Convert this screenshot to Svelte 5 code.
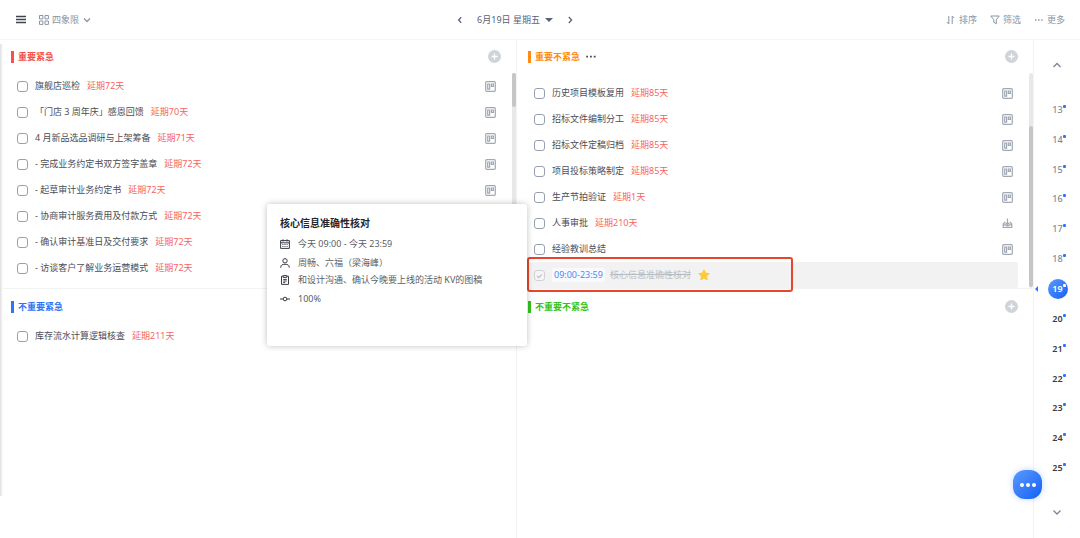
<script lang="ts">
  type Task = {
    title: string
    late?: string
    source?: 'board' | 'inbox'
    time?: string
    done?: boolean
  }

  type Quadrant = {
    name: string
    tone: string
    tasks: Task[]
    more?: boolean
    scroll?: 'start' | 'end'
  }

  const quadrants: Quadrant[] = [
    {
      name: '重要紧急',
      tone: 'red',
      scroll: 'start',
      tasks: [
        { title: '旗舰店巡检', late: '延期72天', source: 'board' },
        { title: '「门店 3 周年庆」感恩回馈', late: '延期70天', source: 'board' },
        { title: '4 月新品选品调研与上架筹备', late: '延期71天', source: 'board' },
        { title: '- 完成业务约定书双方签字盖章', late: '延期72天', source: 'board' },
        { title: '- 起草审计业务约定书', late: '延期72天', source: 'board' },
        { title: '- 协商审计服务费用及付款方式', late: '延期72天', source: 'board' },
        { title: '- 确认审计基准日及交付要求', late: '延期72天', source: 'board' },
        { title: '- 访谈客户了解业务运营模式', late: '延期72天', source: 'board' }
      ]
    },
    {
      name: '重要不紧急',
      tone: 'orange',
      more: true,
      scroll: 'end',
      tasks: [
        { title: '历史项目模板复用', late: '延期85天', source: 'board' },
        { title: '招标文件编制分工', late: '延期85天', source: 'board' },
        { title: '招标文件定稿归档', late: '延期85天', source: 'board' },
        { title: '项目投标策略制定', late: '延期85天', source: 'board' },
        { title: '生产节拍验证', late: '延期1天', source: 'board' },
        { title: '人事审批', late: '延期210天', source: 'inbox' },
        { title: '经验教训总结', source: 'board' },
        { title: '核心信息准确性核对', time: '09:00-23:59', done: true }
      ]
    },
    {
      name: '不重要紧急',
      tone: 'blue',
      tasks: [{ title: '库存流水计算逻辑核查', late: '延期211天' }]
    },
    { name: '不重要不紧急', tone: 'green', tasks: [] }
  ]

  const days = Array.from({ length: 13 }, (_, i) => 13 + i)
  let selected = $state(19)
</script>

{#snippet chevron(d: string)}
  <svg class="chevron" viewBox="0 0 10 10" width="10" height="10"><path {d} /></svg>
{/snippet}

<div class="page">
  <header>
    <div class="head-left">
      <button class="menu" aria-label="菜单">
        <svg viewBox="0 0 10 10" width="10" height="10"><path d="M0 1.5h10M0 4.5h10M0 7.5h10" /></svg>
      </button>
      <button class="view">
        <svg class="line" viewBox="0 0 10 10" width="10" height="10">
          <path d="M.5 .5h3.4v3.4H.5zM6 .5h3.4v3.4H6zM.5 6h3.4v3.4H.5zM6 6h3.4v3.4H6z" />
        </svg>
        四象限
        {@render chevron('M2 3.5 5 6.5 8 3.5')}
      </button>
    </div>
    <div class="head-date">
      <button aria-label="前一天">{@render chevron('M6.2 2.2 3.6 5 6.2 7.8')}</button>
      <button class="date">6月19日 星期五 <span class="caret"></span></button>
      <button aria-label="后一天">{@render chevron('M3.8 2 6.6 5 3.8 8')}</button>
    </div>
    <div class="head-right">
      <button>
        <svg class="line" viewBox="0 0 10 10" width="10" height="10"><path d="M2.8 1v8L.8 7M6.2 9V1l2 2" /></svg>
        排序
      </button>
      <button>
        <svg class="line" viewBox="0 0 10 10" width="10" height="10"><path d="M.8 1h8.4L6.3 4.8v4L3.8 7.2V4.8z" /></svg>
        筛选
      </button>
      <button>
        <svg class="dots" viewBox="0 0 10 10" width="10" height="10"><path d="M1 4.3h1.4v1.4H1zM4.1 4.3h1.4v1.4H4.1zM7.2 4.3h1.4v1.4H7.2z" /></svg>
        更多
      </button>
    </div>
  </header>

  <main>
    <div class="board">
      {#each quadrants as q}
        <section class={q.tone}>
          <div class="title">
            <h2>{q.name}</h2>
            {#if q.more}
              <button class="title-more" aria-label="更多操作">
                <svg viewBox="0 0 10 4" width="10" height="4"><path d="M.2 .7h1.8v1.8H.2zM4 .7h1.8v1.8H4zM7.8 .7h1.8v1.8H7.8z" /></svg>
              </button>
            {/if}
            {#if q.tone !== 'blue'}
              <button class="add" aria-label="新建">
                <svg viewBox="0 0 13 13" width="13" height="13">
                  <circle cx="6.5" cy="6.5" r="6.5" />
                  <path d="M6.5 3.5v6M3.5 6.5h6" />
                </svg>
              </button>
            {/if}
          </div>
          <div class="scroller" class:scrolled={q.scroll === 'end'}>
            <ul>
              {#each q.tasks as t}
                <li class:done={t.done}>
                  <label>
                    <input type="checkbox" checked={t.done} />
                    {#if t.time}<span class="time">{t.time}</span>{/if}
                    <span class="name">{t.title}</span>
                  </label>
                  {#if t.late}<span class="late">{t.late}</span>{/if}
                  {#if t.done}
                    <svg class="star" viewBox="0 0 12 12" width="12" height="12">
                      <path d="M6 .8 7.6 4.1l3.6.5-2.6 2.6.6 3.6L6 9.1l-3.2 1.7.6-3.6L.8 4.6l3.6-.5z" />
                    </svg>
                    <span class="marker"></span>
                  {/if}
                  {#if t.source === 'board'}
                    <svg class="source" viewBox="0 0 11 11" width="11" height="11">
                      <rect x=".7" y=".7" width="9.6" height="9.6" rx="1" />
                      <path d="M2.7 3h1.9v5.2H2.7zM6.4 3h2v2.4h-2z" />
                    </svg>
                  {:else if t.source === 'inbox'}
                    <svg class="source" viewBox="0 0 11 11" width="11" height="11">
                      <path d="M5.5 .5v6M3.6 4.8l1.9 1.8 1.9-1.8M3 4 1.2 6v3.5h8.6V6L8 4M1.2 6.8h2.3l.8 1h2.4l.8-1h2.3" />
                    </svg>
                  {/if}
                </li>
              {/each}
            </ul>
            {#if q.scroll}
              <div class="track"><div class="thumb {q.scroll}"></div></div>
            {/if}
          </div>
        </section>
      {/each}
    </div>

    <nav aria-label="日期">
      <button class="step" aria-label="向上">{@render chevron('M1.5 7 5 3.5 8.5 7')}</button>
      <ol>
        {#each days as day}
          <li class:current={day === selected}>
            <button class="day" class:past={day < selected} onclick={() => (selected = day)}>{day}</button>
          </li>
        {/each}
      </ol>
      <button class="step" aria-label="向下">{@render chevron('M1.5 3.5 5 7 8.5 3.5')}</button>
    </nav>
  </main>

  <aside class="popover">
    <h3>核心信息准确性核对</h3>
    <p class="when">
      <svg viewBox="0 0 10 10" width="10" height="10"><path d="M.6 1.6h8.8v7.8H.6zM.6 3.8h8.8M3 .3v2.2M7 .3v2.2" /><path d="M2.4 5.5h1M4.5 5.5h1M6.6 5.5h1M2.4 7.5h1M4.5 7.5h1M6.6 7.5h1" /></svg>
      今天 09:00 - 今天 23:59
    </p>
    <p class="who">
      <svg viewBox="0 0 10 10" width="10" height="10"><circle cx="5" cy="2.8" r="2.2" /><path d="M.8 9.7V9c0-2 1.6-2.7 4.2-2.7S9.2 7 9.2 9v.7" /></svg>
      周畅、六福（梁海峰）
    </p>
    <p class="note">
      <svg viewBox="0 0 10 10" width="10" height="10"><path d="M3.2 1.2H1.5v8.2h7V1.2H6.8M3.2 .6h3.6v1.8H3.2zM3.2 4.4h3.6M3.2 6h3.6M3.2 7.6h2" /></svg>
      和设计沟通、确认今晚要上线的活动 KV的图稿
    </p>
    <p class="progress">
      <svg viewBox="0 0 10 10" width="10" height="10"><circle cx="5" cy="5" r="1.8" /><path d="M0 5h3.2M6.8 5H10" /></svg>
      100%
    </p>
  </aside>

  <button class="fab" aria-label="更多功能">
    <svg viewBox="0 0 16 4" width="16" height="4"><circle cx="2" cy="2" r="2" /><circle cx="8" cy="2" r="2" /><circle cx="14" cy="2" r="2" /></svg>
  </button>
</div>

<style>
  :global(body) {
    margin: 0;
    background: #fff;
  }

  .page {
    position: relative;
    display: flex;
    flex-direction: column;
    min-height: 100vh;
    font: 9px/14px "Noto Sans", "Noto Sans CJK SC", sans-serif;
    color: #4a4d55;
  }

  .page::before {
    content: '';
    position: absolute;
    left: 0;
    top: 44px;
    bottom: 42px;
    width: 3px;
    background: linear-gradient(90deg, #dedede, #fff);
  }

  button {
    display: flex;
    align-items: center;
    padding: 0;
    border: 0;
    background: none;
    font: inherit;
    color: inherit;
    cursor: pointer;
  }

  svg {
    flex-shrink: 0;
    fill: none;
    stroke: currentColor;
  }

  .chevron {
    stroke-width: 1.3;
  }

  h2, h3, p, ul, ol {
    margin: 0;
    padding: 0;
    list-style: none;
  }

  header {
    display: flex;
    align-items: center;
    height: 39px;
    border-bottom: 1px solid #f5f5f6;
    color: #8b95a5;
  }

  .head-left {
    flex: 1 1 0;
    display: flex;
    gap: 13px;
    padding-left: 16px;
    box-sizing: border-box;
  }

  .menu {
    color: #3e434c;
  }

  .menu svg {
    stroke-width: 1.4;
  }

  .view {
    gap: 3px;
  }

  .head-date {
    display: flex;
    align-items: center;
    gap: 12px;
    color: #59627a;
  }

  .date {
    gap: 5px;
  }

  .caret {
    border: 4px solid transparent;
    border-top-color: #59627a;
    border-bottom: 0;
  }

  .head-right {
    flex: 1 1 52px;
    display: flex;
    justify-content: flex-end;
    gap: 13px;
    padding-right: 15px;
    margin-left: 14px;
    box-sizing: border-box;
  }

  .head-right button {
    gap: 3px;
  }

  .dots {
    fill: currentColor;
    stroke: none;
  }

  main {
    flex: 1;
    display: flex;
  }

  .board {
    flex: 1;
    display: grid;
    grid-template-columns: 1fr 1fr;
    grid-template-rows: auto 1fr;
  }

  section {
    border-right: 1px solid #f3f3f5;
  }

  .red,
  .orange {
    border-bottom: 1px solid #f3f3f5;
  }

  .blue,
  .green {
    padding-top: 1px;
  }

  .title {
    display: flex;
    align-items: center;
    height: 33px;
    padding: 0 15px 0 11px;
  }

  h2 {
    padding-left: 4px;
    border-left: 3px solid currentColor;
    font-size: 9px;
    line-height: 12px;
    font-weight: 700;
  }

  .red h2 { color: #f8514b; }
  .orange h2 { color: #ff8c12; }
  .blue h2 { color: #3174f6; }
  .green h2 { color: #35c41c; }

  .title-more {
    margin-left: 6px;
  }

  .title-more svg {
    fill: #4a4d55;
    stroke: none;
  }

  .add {
    margin-left: auto;
  }

  .add circle {
    fill: #cfd3da;
    stroke: none;
  }

  .add path {
    stroke: #fff;
    stroke-width: 1.3;
  }

  .scroller {
    display: flex;
  }

  .scroller ul {
    flex: 1;
    padding-right: 4px;
  }

  .red ul,
  .orange ul {
    padding-right: 0;
  }

  .red ul {
    padding-bottom: 7px;
  }

  .scrolled ul {
    padding-top: 7px;
  }

  ul li {
    position: relative;
    display: flex;
    align-items: center;
    height: 26px;
    margin: 0 11px;
    padding: 0 5px 0 6px;
  }

  label {
    display: flex;
    align-items: center;
  }

  input {
    appearance: none;
    width: 11px;
    height: 11px;
    margin: 0 7px 0 0;
    border: 1px solid #97a0b0;
    border-radius: 3px;
    background: #fff;
  }

  .late {
    margin-left: 7px;
    color: #f76560;
  }

  .source {
    margin-left: auto;
    stroke-width: 1.2;
    color: #a0a8b4;
  }

  .done {
    background: #f2f2f3;
    border-radius: 2px;
    color: #b9bcc3;
  }

  .done input {
    display: grid;
    place-items: center;
    border-color: #cfd2d8;
    background: #f5f5f6;
  }

  .done input::after {
    content: '';
    width: 4px;
    height: 2px;
    border: solid #b9bcc3;
    border-width: 0 0 1px 1px;
    transform: rotate(-45deg);
  }

  .done .name {
    text-decoration: line-through;
  }

  .time {
    margin-right: 5px;
    padding: 0 2px;
    border-radius: 2px;
    background: #f8faff;
    color: #4c8bf5;
  }

  .star {
    margin-left: 7px;
    fill: #fbcb3d;
    stroke: #fbcb3d;
    stroke-linejoin: round;
  }

  .marker {
    position: absolute;
    left: -1px;
    top: -5px;
    width: 262px;
    height: 31px;
    border: 2px solid #e8452b;
    border-radius: 3px;
  }

  .track {
    width: 4px;
    background: #e8e8e8;
    border-radius: 2px;
  }

  .thumb {
    height: 34px;
    background: #c6c6c6;
    border-radius: 2px;
  }

  .thumb.end {
    height: 75%;
    margin-top: 53px;
  }

  nav {
    display: flex;
    flex-direction: column;
    align-items: center;
    width: 46px;
  }

  .step {
    height: 55px;
    padding-bottom: 6px;
    color: #7c8596;
  }

  .step:last-child {
    padding: 2px 0 0;
  }

  ol {
    flex: 1;
    display: flex;
    flex-direction: column;
    width: 100%;
  }

  ol li {
    flex: 1;
    position: relative;
    display: flex;
    align-items: center;
    justify-content: center;
    padding-left: 1px;
  }

  .day {
    position: relative;
    justify-content: center;
    width: 20px;
    height: 20px;
    border-radius: 50%;
    font-weight: 600;
    color: #3a3d45;
  }

  .day.past {
    font-weight: 500;
    color: #7f8999;
  }

  .day::after {
    content: '';
    position: absolute;
    right: 2px;
    top: 5px;
    width: 3px;
    height: 3px;
    border-radius: 1px;
    background: #2f74ff;
  }

  .current .day {
    background: linear-gradient(135deg, #5a9bff, #1560f5);
    color: #fff;
  }

  .current .day::after {
    background: #fff;
  }

  .current::before {
    content: '';
    position: absolute;
    left: 1px;
    border: 3px solid transparent;
    border-right-color: #2f74ff;
    border-left: 0;
  }

  .popover {
    position: absolute;
    left: 267px;
    top: 204px;
    width: 260px;
    height: 142px;
    box-sizing: border-box;
    padding: 11px 13px;
    border-radius: 3px;
    background: #fff;
    box-shadow: 0 0 6px rgba(0, 0, 0, 0.25);
    color: #5b5e66;
  }

  h3 {
    font-size: 10px;
    line-height: 16px;
    margin-bottom: 3px;
    color: #23262e;
  }

  .popover p {
    display: flex;
    align-items: center;
    gap: 8px;
    white-space: nowrap;
  }

  .popover svg {
    color: #3a3d45;
  }

  .popover .when { height: 20px; }
  .popover .who { height: 18px; }
  .popover .note { height: 16px; }
  .popover .progress { height: 22px; }

  .fab {
    position: absolute;
    right: 38px;
    bottom: 39px;
    justify-content: center;
    width: 29px;
    height: 29px;
    border-radius: 12px;
    background: linear-gradient(135deg, #5a9bff, #1560f5);
    box-shadow: 0 0 6px rgba(47, 116, 255, 0.3);
  }

  .fab svg {
    fill: #fff;
    stroke: none;
  }
</style>
